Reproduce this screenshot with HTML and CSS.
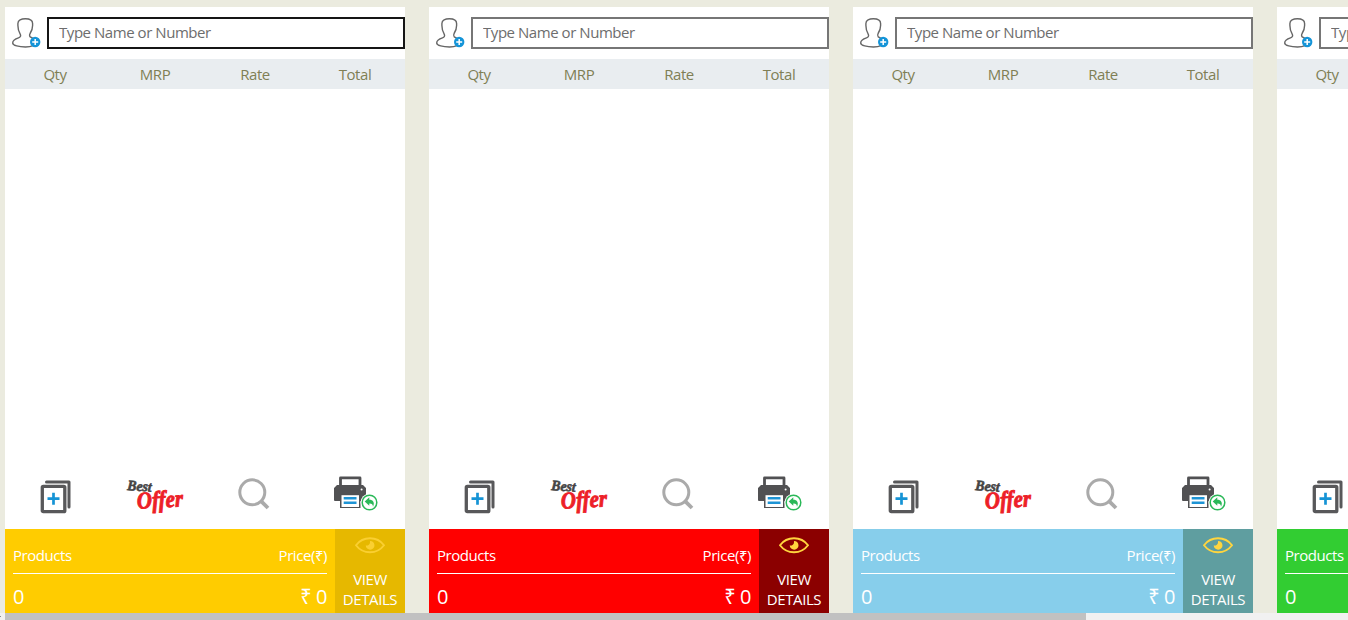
FILE: index.html
```html
<!DOCTYPE html>
<html lang="en">
<head>
<meta charset="utf-8">
<title>Billing counters</title>
<link rel="stylesheet" href="styles.css">
</head>
<body>
<svg class="sprites" aria-hidden="true">
  <symbol id="user" viewBox="0 0 30 32">
    <path d="M8.200 17.100C6.600 14.600 5.900 11.500 5.900 8.500V6.500C5.900 3.300 9.200 1.700 13.300 1.700S20.600 3.300 20.600 6.500V8.500C20.600 11.500 19.800 14 18.100 16.500C17.500 17.500 17.600 19.100 18.300 20L22 21.800M8.200 17.100C9.200 19 8.200 20.400 6.500 20.900C3.600 21.800 .7 23 .7 25.900C.7 28.500 7 30 13.500 30C16 30 19 29.600 21 28.600" fill="none" stroke="#666" stroke-width="1.400"/>
    <circle cx="23.200" cy="25" r="5.200" fill="#1494d8"/>
    <path d="M20.200 25H26.200M23.200 22V28" stroke="#fff" stroke-width="1.500"/>
  </symbol>
  <symbol id="add" viewBox="0 0 32 34">
    <path d="M6.500 2H29V27" fill="none" stroke="#58585a" stroke-width="3" stroke-linecap="round" stroke-linejoin="round"/>
    <rect x="2.300" y="6.300" width="22.500" height="25.400" rx="1" fill="#fff" stroke="#58585a" stroke-width="3.300"/>
    <path d="M7.500 18.700H19.500M13.500 12.700V24.700" stroke="#1593d5" stroke-width="2.700"/>
  </symbol>
  <symbol id="offer" viewBox="0 0 60 38">
    <g transform="rotate(4 15 12)">
      <text class="script script-best" x="1" y="13" textLength="24.500" lengthAdjust="spacingAndGlyphs">Best</text>
    </g>
    <g transform="rotate(-3 34 24)">
      <text class="script script-offer" x="11" y="29.500" textLength="46" lengthAdjust="spacingAndGlyphs">Offer</text>
    </g>
  </symbol>
  <symbol id="search" viewBox="0 0 32 32">
    <circle cx="14.300" cy="14.300" r="12.500" fill="none" stroke="#aaa" stroke-width="3"/>
    <path d="M23.300 23.300L30 30" stroke="#aaa" stroke-width="3.800"/>
  </symbol>
  <symbol id="print" viewBox="0 0 45 36">
    <path d="M6.500 11V1.900H26V11" fill="none" stroke="#515153" stroke-width="2.800" stroke-linejoin="round"/>
    <path d="M3 9H29L32 12V24Q32 25 31 25H26.500V32H6V25H1Q0 25 0 24V12Z" fill="#515153"/>
    <path d="M7.500 19.200H25V31H7.500Z" fill="#fff"/>
    <path d="M9.700 22.300H22.500M9.700 26.700H22.500" stroke="#1e94d5" stroke-width="2.400"/>
    <circle cx="27.600" cy="13.500" r="1" fill="#fff"/>
    <circle cx="35.500" cy="26.500" r="9" fill="#fff"/>
    <circle cx="35.500" cy="26.500" r="7.300" fill="#fff" stroke="#2ab858" stroke-width="1.500"/>
    <path d="M30.700 25.500L35.300 21.300V23.800C39 23.800 41.100 26.500 39 30.800C38.800 28.100 37.800 27.300 35.300 27.400V29.800Z" fill="#2ab858"/>
  </symbol>
  <symbol id="eye" viewBox="0 0 30 17">
    <path d="M1 8.200C8-1.100 22-1.100 29 8.200C22 17.500 8 17.500 1 8.200Z" fill="none" stroke="#ffd53e" stroke-width="1.900"/>
    <path d="M15 3.900A4.400 4.400 0 1 1 10.700 8.600C13.300 8.800 15.300 7.500 15 3.900Z" fill="#ffd53e"/>
  </symbol>
</svg>

<main class="counters">
  <section class="counter gold active">
    <div class="customer"><svg class="user"><use href="#user"/></svg><input class="lookup" type="text" placeholder="Type Name or Number"></div>
    <div class="columns"><span>Qty</span><span>MRP</span><span>Rate</span><span>Total</span></div>
    <div class="items"></div>
    <div class="tools"><svg class="add"><use href="#add"/></svg><svg class="offer"><use href="#offer"/></svg><svg class="search"><use href="#search"/></svg><svg class="print"><use href="#print"/></svg></div>
    <footer class="summary">
      <div class="totals"><div class="labels"><span>Products</span><span>Price(₹)</span></div><div class="values"><span>0</span><span>₹ 0</span></div></div>
      <div class="details"><svg class="eye"><use href="#eye"/></svg><span>VIEW<br>DETAILS</span></div>
    </footer>
  </section>
  <section class="counter red">
    <div class="customer"><svg class="user"><use href="#user"/></svg><input class="lookup" type="text" placeholder="Type Name or Number"></div>
    <div class="columns"><span>Qty</span><span>MRP</span><span>Rate</span><span>Total</span></div>
    <div class="items"></div>
    <div class="tools"><svg class="add"><use href="#add"/></svg><svg class="offer"><use href="#offer"/></svg><svg class="search"><use href="#search"/></svg><svg class="print"><use href="#print"/></svg></div>
    <footer class="summary">
      <div class="totals"><div class="labels"><span>Products</span><span>Price(₹)</span></div><div class="values"><span>0</span><span>₹ 0</span></div></div>
      <div class="details"><svg class="eye"><use href="#eye"/></svg><span>VIEW<br>DETAILS</span></div>
    </footer>
  </section>
  <section class="counter sky">
    <div class="customer"><svg class="user"><use href="#user"/></svg><input class="lookup" type="text" placeholder="Type Name or Number"></div>
    <div class="columns"><span>Qty</span><span>MRP</span><span>Rate</span><span>Total</span></div>
    <div class="items"></div>
    <div class="tools"><svg class="add"><use href="#add"/></svg><svg class="offer"><use href="#offer"/></svg><svg class="search"><use href="#search"/></svg><svg class="print"><use href="#print"/></svg></div>
    <footer class="summary">
      <div class="totals"><div class="labels"><span>Products</span><span>Price(₹)</span></div><div class="values"><span>0</span><span>₹ 0</span></div></div>
      <div class="details"><svg class="eye"><use href="#eye"/></svg><span>VIEW<br>DETAILS</span></div>
    </footer>
  </section>
  <section class="counter green">
    <div class="customer"><svg class="user"><use href="#user"/></svg><input class="lookup" type="text" placeholder="Type Name or Number"></div>
    <div class="columns"><span>Qty</span></div>
    <div class="items"></div>
    <div class="tools"><svg class="add"><use href="#add"/></svg></div>
    <footer class="summary">
      <div class="totals"><div class="labels"><span>Products</span></div><div class="values"><span>0</span></div></div>
    </footer>
  </section>
</main>
<div class="scrollbar"><span class="arrow"></span><span class="thumb"></span></div>
</body>
</html>
```

FILE: styles.css
```css
* { box-sizing: border-box; }
body {
  margin: 0;
  height: 620px;
  display: flex;
  flex-direction: column;
  overflow: hidden;
  background: #ebebdf;
  font: 15px/20px "Open Sans", "Noto Sans", sans-serif;
  letter-spacing: -0.45px;
}
svg { display: block; flex: none; }
.sprites { display: none; }
.counters {
  height: 613px;
  display: flex;
  gap: 24px;
  padding: 7px 0 0 5px;
  overflow: hidden;
}
.counter {
  flex: 0 0 400px;
  display: flex;
  flex-direction: column;
  background: #fff;
}
.customer { height: 52px; display: flex; padding: 10px 0 0 7px; }
.user { width: 30px; height: 32px; margin-right: 5px; }
.lookup {
  width: 358px;
  height: 32px;
  border: 2px solid #767676;
  border-radius: 0;
  outline: 0;
  padding: 0 10px 2px;
  background: #fff;
  font: inherit;
  letter-spacing: -0.45px;
}
.lookup::placeholder { color: #6d6d6d; opacity: 1; }
.active .lookup { border-color: #151515; }
.columns {
  height: 30px;
  display: grid;
  grid-template-columns: repeat(4, 100px);
  align-items: center;
  text-align: center;
  background: #e9edf0;
  color: #7f7f55;
}
.items { flex: 1; }
.tools { height: 60px; display: flex; padding-left: 35px; }
.add { width: 32px; height: 34px; margin-top: 11px; }
.offer { width: 60px; height: 38px; margin: 9px 0 0 54px; }
.search { width: 32px; height: 32px; margin: 9px 0 0 52px; }
.print { width: 45px; height: 36px; margin: 7px 0 0 64px; }
.script { font-family: "Liberation Serif", serif; font-style: italic; font-weight: 700; letter-spacing: 0; }
.script-best { font-size: 14.500px; fill: #444; stroke: #444; stroke-width: .6px; }
.script-offer { font-size: 24px; fill: #ed2027; stroke: #ed2027; stroke-width: .9px; }
.summary { height: 84px; display: flex; color: #fff; }
.totals { width: 330px; padding: 16px 8px 0; }
.labels, .values { display: flex; justify-content: space-between; }
.labels { height: 29px; border-bottom: 1px solid #fff; }
.values { font-size: 20px; line-height: 28px; padding-top: 9px; }
.details {
  width: 70px;
  display: flex;
  flex-direction: column;
  align-items: center;
  padding-top: 8px;
  text-align: center;
  letter-spacing: -0.4px;
}
.eye { width: 30px; height: 17px; margin-bottom: 15px; }
.gold .eye { opacity: .8; }
.gold .summary { background: #fc0; }
.gold .details { background: #e6b800; }
.red .summary { background: #f00; }
.red .details { background: #8b0000; }
.sky .summary { background: #87ceeb; }
.sky .details { background: #5f9ea0; }
.green .summary { background: #32cd32; }
.scrollbar { height: 7px; display: flex; background: #f1f1f1; }
.arrow { width: 5px; }
.arrow::before { content: ""; display: block; width: 1px; height: 1px; margin-top: 3px; background: #888; }
.thumb { width: 1081px; background: #c1c1c1; }
```
